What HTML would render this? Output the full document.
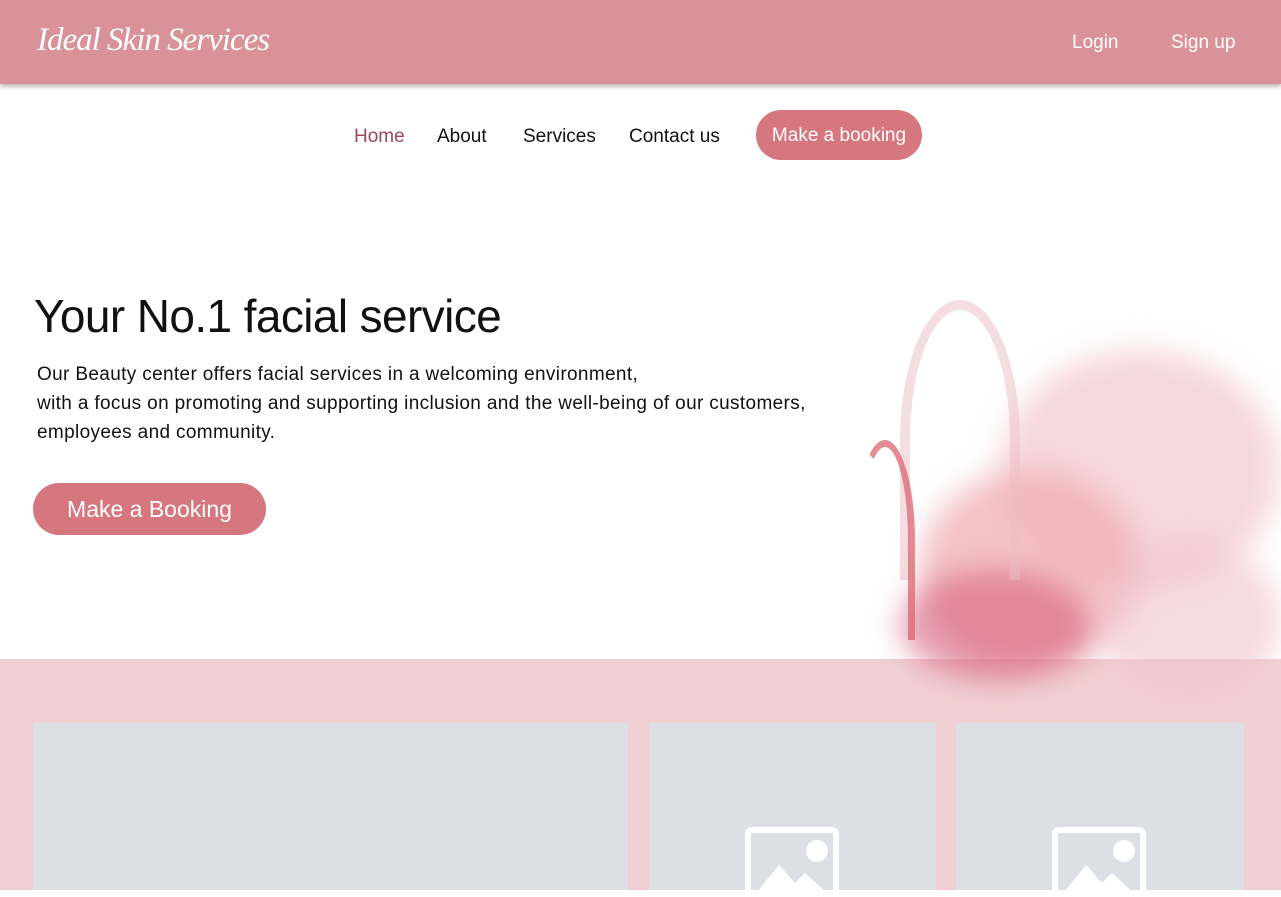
<!DOCTYPE html>
<html><head><meta charset="utf-8"><style>
*{margin:0;padding:0;box-sizing:border-box}
body{width:1281px;height:890px;overflow:hidden;background:#fff;font-family:"Liberation Sans",sans-serif;position:relative}
.hdr{position:absolute;left:0;top:0;width:1281px;height:84px;background:#d99398;box-shadow:0 3px 4px rgba(0,0,0,.25);z-index:3}
.logo{position:absolute;left:37px;top:22px;color:#fff;font-family:"Liberation Serif",serif;font-style:italic;font-size:33px;letter-spacing:-1px}
.hl{position:absolute;top:32px;color:#fff;font-size:19px}
.nav a{position:absolute;top:126px;font-size:19px;color:#111;text-decoration:none}
.bk{position:absolute;left:756px;top:110px;width:166px;height:50px;border-radius:25px;background:#d6777f;color:#fff;font-size:19px;text-align:center;line-height:52px}
h1{position:absolute;left:34px;top:289px;font-weight:normal;font-size:46px;letter-spacing:-0.6px;color:#111}
.p{position:absolute;left:37px;top:360px;font-size:19px;line-height:29px;color:#111;letter-spacing:0.35px}
.b2{position:absolute;left:33px;top:483px;width:233px;height:52px;border-radius:26px;background:#d6777f;color:#fff;font-size:23px;text-align:center;line-height:52px}
.sec{position:absolute;left:0;top:659px;width:1281px;height:231px;background:#f0d0d3}
.card{position:absolute;top:723px;height:167px;background:#dce0e4;z-index:2}
.blob{position:absolute;border-radius:50%;filter:blur(14px)}
</style></head><body>
<div class="hdr"><div class="logo">Ideal Skin Services</div>
<div class="hl" style="left:1072px">Login</div><div class="hl" style="left:1171px">Sign up</div></div>
<div class="nav"><a style="left:354px;color:#9a4a55">Home</a><a style="left:437px">About</a><a style="left:523px">Services</a><a style="left:629px">Contact us</a></div>
<div class="bk">Make a booking</div>
<h1>Your No.1 facial service</h1>
<div class="p">Our Beauty center offers facial services in a welcoming environment,<br>with a focus on promoting and supporting inclusion and the well-being of our customers,<br>employees and community.</div>
<div class="b2">Make a Booking</div>
<div class="sec"></div>
<div style="position:absolute;left:840px;top:290px;width:441px;height:450px;z-index:1">
<div class="blob" style="left:160px;top:60px;width:280px;height:240px;background:rgba(242,200,205,.7)"></div>
<div class="blob" style="left:80px;top:180px;width:220px;height:200px;background:rgba(240,170,175,.7)"></div>
<div class="blob" style="left:60px;top:280px;width:190px;height:110px;background:rgba(215,95,125,.6)"></div>
<div class="blob" style="left:260px;top:250px;width:180px;height:160px;background:rgba(240,195,205,.6)"></div>
<div style="position:absolute;left:60px;top:10px;width:120px;height:280px;border:10px solid rgba(235,190,195,.5);border-radius:50% 50% 0 0;border-bottom:none"></div>
<div style="position:absolute;left:15px;top:150px;width:60px;height:200px;border:7px solid rgba(220,100,115,.75);border-radius:50% 50% 0 0;border-bottom:none;border-left-color:transparent"></div>
</div>
<div class="card" style="left:33px;width:595px"></div>
<div class="card" style="left:649px;width:287px"><svg style="position:absolute;left:96px;top:104px" width="94" height="70"><rect x="3" y="3" width="88" height="80" rx="4" fill="none" stroke="#fff" stroke-width="6"/><circle cx="72" cy="24" r="11" fill="#fff"/><path d="M8 70 L34 38 L50 56 L60 46 L86 70Z" fill="#fff"/></svg></div>
<div class="card" style="left:956px;width:288px"><svg style="position:absolute;left:96px;top:104px" width="94" height="70"><rect x="3" y="3" width="88" height="80" rx="4" fill="none" stroke="#fff" stroke-width="6"/><circle cx="72" cy="24" r="11" fill="#fff"/><path d="M8 70 L34 38 L50 56 L60 46 L86 70Z" fill="#fff"/></svg></div>
</body></html>
